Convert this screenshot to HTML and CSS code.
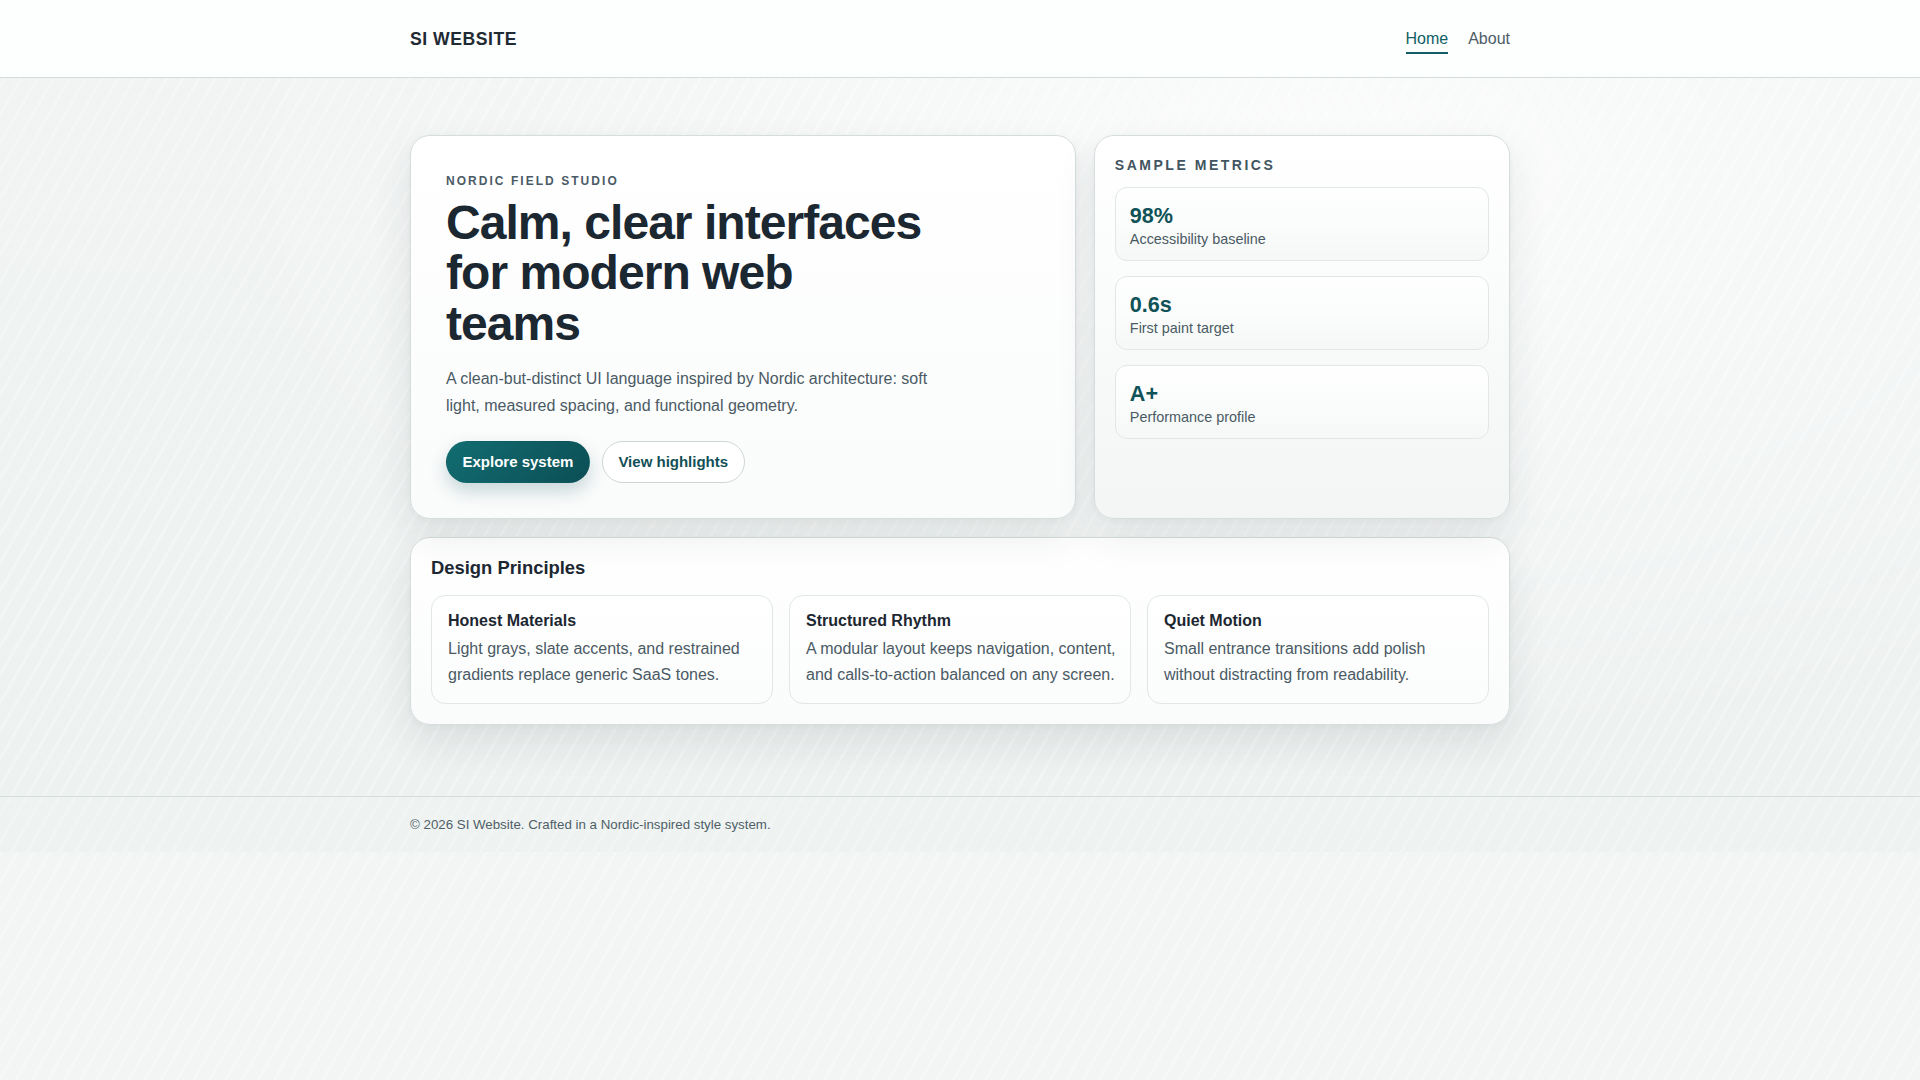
FILE: index.html
```html
<!DOCTYPE html>
<html lang="en">
<head>
<meta charset="utf-8">
<title>SI Website</title>
<link rel="stylesheet" href="styles.css">
</head>
<body>
<header class="site-header">
  <div class="container header-inner">
    <a class="brand" href="#">SI WEBSITE</a>
    <nav class="nav">
      <a class="nav-link active" href="#">Home</a>
      <a class="nav-link" href="#">About</a>
    </nav>
  </div>
</header>
<main class="main">
  <div class="container">
    <div class="hero-grid">
      <section class="card hero">
        <p class="eyebrow">NORDIC FIELD STUDIO</p>
        <h1 class="hero-title">Calm, clear interfaces for modern web teams</h1>
        <p class="hero-text">A clean-but-distinct UI language inspired by Nordic architecture: soft light, measured spacing, and functional geometry.</p>
        <div class="actions">
          <a class="btn btn-primary" href="#">Explore system</a>
          <a class="btn btn-ghost" href="#">View highlights</a>
        </div>
      </section>
      <aside class="card metrics">
        <h2 class="metrics-title">SAMPLE METRICS</h2>
        <div class="metric">
          <div class="metric-value">98%</div>
          <div class="metric-label">Accessibility baseline</div>
        </div>
        <div class="metric">
          <div class="metric-value">0.6s</div>
          <div class="metric-label">First paint target</div>
        </div>
        <div class="metric">
          <div class="metric-value">A+</div>
          <div class="metric-label">Performance profile</div>
        </div>
      </aside>
    </div>
    <section class="card principles">
      <h2 class="section-title">Design Principles</h2>
      <div class="principle-grid">
        <article class="principle">
          <h3 class="principle-title">Honest Materials</h3>
          <p class="principle-text">Light grays, slate accents, and restrained gradients replace generic SaaS tones.</p>
        </article>
        <article class="principle">
          <h3 class="principle-title">Structured Rhythm</h3>
          <p class="principle-text">A modular layout keeps navigation, content, and calls-to-action balanced on any screen.</p>
        </article>
        <article class="principle">
          <h3 class="principle-title">Quiet Motion</h3>
          <p class="principle-text">Small entrance transitions add polish without distracting from readability.</p>
        </article>
      </div>
    </section>
  </div>
</main>
<footer class="site-footer">
  <div class="container">
    <p class="footer-text">© 2026 SI Website. Crafted in a Nordic-inspired style system.</p>
  </div>
</footer>
</body>
</html>
```
FILE: styles.css
```css
html {
  background-color: #f2f5f4;
  background-image: repeating-linear-gradient(120deg, rgba(255,255,255,0.3) 0 3px, rgba(255,255,255,0) 3px 14px);
}

body {
  margin: 0;
  font-family: "Liberation Sans", Arial, sans-serif;
  color: #1c2832;
  background-color: #eef2f1;
  background-image:
    repeating-linear-gradient(120deg, rgba(255,255,255,0.28) 0 3px, rgba(255,255,255,0) 3px 14px),
    radial-gradient(ellipse at 70% 20%, rgba(255,255,255,0.7), rgba(255,255,255,0) 60%),
    linear-gradient(180deg, #f1f4f3 0%, #edf1f0 100%);
}

a {
  text-decoration: none;
}

.container {
  width: 1100px;
  margin: 0 auto;
}

/* Header */
.site-header {
  background: #fdfefe;
  border-bottom: 1px solid #d4dcdc;
}

.header-inner {
  height: 77px;
  display: flex;
  align-items: center;
  justify-content: space-between;
}

.brand {
  font-size: 17.6px;
  font-weight: 700;
  letter-spacing: 0.03em;
  color: #1f2a33;
  padding-top: 2px;
}

.nav {
  display: flex;
  gap: 20px;
  align-items: center;
}

.nav-link {
  font-size: 16px;
  color: #4d5c66;
  padding: 6px 0 4px;
  border-bottom: 2px solid transparent;
}

.nav-link.active {
  color: #0f5f65;
  border-bottom-color: #0f5f65;
}

/* Main */
.main {
  padding: 57px 0 71px;
}

.hero-grid {
  display: grid;
  grid-template-columns: 1.6fr 1fr;
  gap: 18px;
  margin-bottom: 18px;
}

.card {
  border: 1px solid #d6dddd;
  border-radius: 20px;
  box-shadow: 0 18px 40px rgba(28, 48, 54, 0.09), 0 2px 6px rgba(28, 48, 54, 0.04);
}

.hero {
  padding: 37px 35px 35px;
  background: linear-gradient(180deg, #ffffff 0%, #fafbfb 100%);
}

.eyebrow {
  margin: 0;
  font-size: 12px;
  line-height: 1.4;
  font-weight: 700;
  letter-spacing: 0.17em;
  color: #4b5b66;
}

.hero-title {
  margin: 8px 0 16px;
  max-width: 480px;
  font-size: 48px;
  line-height: 1.05;
  letter-spacing: -0.02em;
  font-weight: 700;
  color: #1b2731;
}

.hero-text {
  margin: 0 0 22px;
  max-width: 500px;
  font-size: 16px;
  line-height: 1.7;
  color: #4a5a64;
}

.actions {
  display: flex;
  gap: 12px;
}

.btn {
  display: inline-block;
  font-size: 15px;
  line-height: 18px;
  font-weight: 700;
  padding: 11px 15.5px;
  border-radius: 999px;
  border: 1px solid transparent;
}

.btn-primary {
  color: #ffffff;
  background: linear-gradient(135deg, #126d71 0%, #0b4e55 100%);
  box-shadow: 0 8px 18px rgba(14, 84, 90, 0.22);
}

.btn-ghost {
  color: #124f56;
  background: #ffffff;
  border-color: #cfd8d8;
}

/* Metrics */
.metrics {
  padding: 20px;
  display: flex;
  flex-direction: column;
  gap: 15px;
  background: linear-gradient(180deg, #ffffff 0%, #f3f6f5 100%);
}

.metrics-title {
  margin: 0 0 -2px;
  font-size: 14px;
  line-height: 18px;
  font-weight: 700;
  letter-spacing: 0.18em;
  color: #425560;
}

.metric {
  padding: 15px 14px 11px;
  border: 1px solid #e1e7e7;
  border-radius: 12px;
  background: linear-gradient(180deg, #ffffff 0%, #f6f8f8 100%);
}

.metric-value {
  font-size: 21.6px;
  line-height: 1.2;
  font-weight: 700;
  color: #0f5257;
}

.metric-label {
  font-size: 14.4px;
  line-height: 20px;
  color: #4a5a63;
}

/* Principles */
.principles {
  padding: 20px;
  background: linear-gradient(180deg, #ffffff 0%, #fafbfb 100%);
}

.section-title {
  margin: 0 0 16px;
  font-size: 18.4px;
  line-height: 1.1;
  font-weight: 700;
  color: #1c2731;
}

.principle-grid {
  display: grid;
  grid-template-columns: repeat(3, 1fr);
  gap: 16px;
}

.principle {
  padding: 16px 11px 16px 16px;
  border: 1px solid #e1e7e7;
  border-radius: 14px;
  background: linear-gradient(180deg, #ffffff 0%, #fbfcfc 100%);
}

.principle-title {
  margin: 0 0 6px;
  font-size: 16px;
  line-height: 18.4px;
  font-weight: 700;
  color: #1c2731;
}

.principle-text {
  margin: 0;
  font-size: 16px;
  line-height: 1.6;
  color: #4a5a64;
}

/* Footer */
.site-footer {
  border-top: 1px solid #d4dcdc;
  padding: 20px 0;
  background: rgba(240, 244, 243, 0.4);
}

.footer-text {
  margin: 0;
  font-size: 13.3px;
  line-height: 15.3px;
  color: #4f5f68;
}
```
